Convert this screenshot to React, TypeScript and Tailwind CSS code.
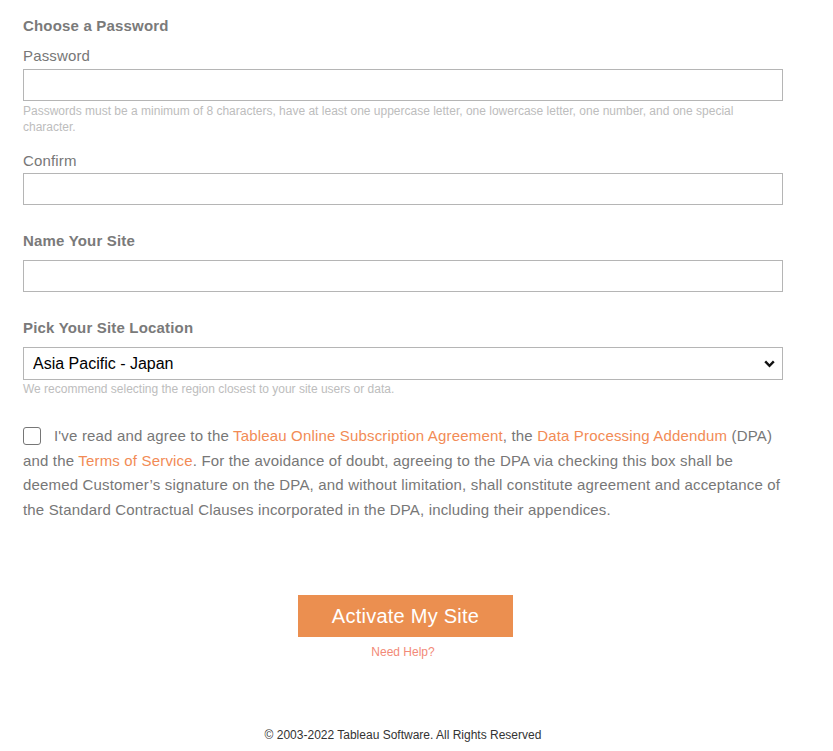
export default function App() {
  return (
    <div className="min-h-[751px] bg-white font-['Liberation_Sans',Arial,sans-serif] text-[#777]">
      <div className="w-[760px] ml-[23px] pt-[16px]">
        {/* password */}
        <h2 className="text-[15px] leading-[20px] font-bold tracking-[0.18px] text-[#7a7a7a]">Choose a Password</h2>
        <label className="block mt-[10px] text-[15px] leading-[20px] tracking-[0.15px]">Password</label>
        <input
          type="password"
          className="block mt-[3px] w-full h-[32px] border border-[#b5b5b5] bg-white outline-none px-2"
        />
        <p className="mt-[2px] text-[12px] leading-[16px] text-[#bdbdbd]">
          Passwords must be a minimum of 8 characters, have at least one uppercase letter, one lowercase letter, one number, and one special
          character.
        </p>
        <label className="block mt-[16px] text-[15px] leading-[20px] tracking-[0.15px]">Confirm</label>
        <input
          type="password"
          className="block mt-[2px] w-full h-[32px] border border-[#b5b5b5] bg-white outline-none px-2"
        />

        {/* site name */}
        <h2 className="mt-[26px] text-[15px] leading-[20px] font-bold tracking-[0.18px] text-[#7a7a7a]">Name Your Site</h2>
        <input
          type="text"
          className="block mt-[9px] w-full h-[32px] border border-[#b5b5b5] bg-white outline-none px-2"
        />

        {/* location */}
        <h2 className="mt-[26px] text-[15px] leading-[20px] font-bold tracking-[0.18px] text-[#7a7a7a]">Pick Your Site Location</h2>
        <div className="relative mt-[9px]">
          <select
            defaultValue="jp"
            className="block w-full h-[33px] appearance-none border border-[#b5b5b5] bg-white pl-[9px] text-[16px] text-black outline-none"
          >
            <option value="jp">Asia Pacific - Japan</option>
            <option value="us">United States - West</option>
            <option value="eu">Europe - Ireland</option>
          </select>
          <svg
            className="pointer-events-none absolute right-[8px] top-[13px] w-[11px] h-[8px]"
            viewBox="0 0 11 8"
            fill="none"
            stroke="#111"
            strokeWidth={2.4}
          >
            <path d="M1.2 1.4 L5.5 5.8 L9.8 1.4" />
          </svg>
        </div>
        <p className="mt-[1px] text-[12px] leading-[16px] text-[#bdbdbd]">
          We recommend selecting the region closest to your site users or data.
        </p>

        {/* agreement */}
        <p className="mt-[27px] text-[15px] leading-[24.5px] tracking-[0.17px]">
          <span className="inline-block align-[-4px] w-[18px] h-[18px] mr-[13px] border border-[#767676] rounded-[3px] bg-white" />
          I've read and agree to the <a className="text-[#f28b55]">Tableau Online Subscription Agreement</a>, the{" "}
          <a className="text-[#f28b55]">Data Processing Addendum</a> (DPA) and the{" "}
          <a className="text-[#f28b55]">Terms of Service</a>. For the avoidance of doubt, agreeing to the DPA via checking this box shall be
          deemed Customer’s signature on the DPA, and without limitation, shall constitute agreement and acceptance of the Standard
          Contractual Clauses incorporated in the DPA, including their appendices.
        </p>

        {/* action */}
        <div className="mt-[73px] flex flex-col items-center">
          <button className="ml-[5px] w-[215px] h-[42px] bg-[#eb8f50] text-white text-[20px] tracking-[0.25px]">Activate My Site</button>
          <a className="mt-[7px] text-[12px] leading-[16px] text-[#f28a78]">Need Help?</a>
        </div>

        <footer className="mt-[67px] text-center text-[12px] leading-[16px] text-[#333]">
          © 2003-2022 Tableau Software. All Rights Reserved
        </footer>
      </div>
    </div>
  );
}
